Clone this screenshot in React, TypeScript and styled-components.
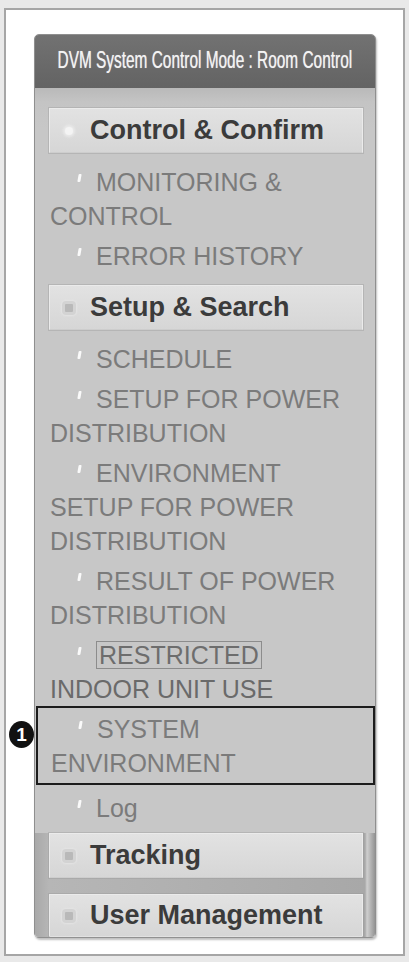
import styled, { createGlobalStyle } from 'styled-components';

const GlobalStyle = createGlobalStyle`
  html, body {
    margin: 0;
    padding: 0;
    background: #e9e9e9;
  }
  body {
    font-family: 'Liberation Sans', Arial, sans-serif;
  }
  * {
    box-sizing: border-box;
  }
`;

type Entry = {
  label: string;
  boxed?: boolean;
  rest?: string;
  highlight?: boolean;
};

type Section = {
  title: string;
  icon: 'dot' | 'square';
  items: Entry[];
};

const sections: Section[] = [
  {
    title: 'Control & Confirm',
    icon: 'dot',
    items: [{ label: 'MONITORING & CONTROL' }, { label: 'ERROR HISTORY' }],
  },
  {
    title: 'Setup & Search',
    icon: 'square',
    items: [
      { label: 'SCHEDULE' },
      { label: 'SETUP FOR POWER DISTRIBUTION' },
      { label: 'ENVIRONMENT SETUP FOR POWER DISTRIBUTION' },
      { label: 'RESULT OF POWER DISTRIBUTION' },
      { label: 'RESTRICTED', boxed: true, rest: 'INDOOR UNIT USE' },
      { label: 'SYSTEM ENVIRONMENT', highlight: true },
      { label: 'Log' },
    ],
  },
];

const App = () => {
  return (
    <>
      <GlobalStyle />
      <Frame>
        <Panel>
          <Header>
            <HeaderText>DVM System Control Mode : Room Control</HeaderText>
          </Header>
          <Body>
            {sections.map((section) => (
              <div key={section.title}>
                <MenuBar>
                  <BarIcon $round={section.icon === 'dot'} />
                  {section.title}
                </MenuBar>
                <ItemList>
                  {section.items.map((item) => (
                    <Item key={item.label} $highlight={item.highlight}>
                      {item.highlight && <Badge>1</Badge>}
                      <Bullet />
                      {item.boxed ? (
                        <>
                          <Boxed>{item.label}</Boxed>
                          <br />
                          <Dark>{item.rest}</Dark>
                        </>
                      ) : (
                        item.label
                      )}
                    </Item>
                  ))}
                </ItemList>
              </div>
            ))}
            <BottomGroup>
              <MenuBar>
                <BarIcon />
                Tracking
              </MenuBar>
              <MenuBar $last>
                <BarIcon />
                User Management
              </MenuBar>
            </BottomGroup>
          </Body>
        </Panel>
      </Frame>
    </>
  );
};

const Frame = styled.div`
  margin: 8px 4px 0 4px;
  height: 948px;
  border: 2px solid #a6a6a6;
  background: #ffffff;
  padding: 24px 29px 0 28px;
`;

const Panel = styled.div`
  position: relative;
  width: 342px;
  border: 1px solid #8f8f8f;
  border-radius: 5px;
  background: #c7c7c7;
  box-shadow: 1px 2px 2px rgba(0, 0, 0, 0.25);
`;

const Header = styled.div`
  height: 53px;
  display: flex;
  align-items: center;
  justify-content: center;
  background: linear-gradient(#727272, #636363);
  border-radius: 4px 4px 0 0;
  overflow: hidden;
`;

const HeaderText = styled.span`
  display: inline-block;
  white-space: nowrap;
  font-size: 23px;
  color: #f4f4f4;
  transform: scaleX(0.67);
  text-shadow: 0 0 1px rgba(255, 255, 255, 0.6);
  margin-top: -2px;
`;

const Body = styled.div`
  padding-top: 20px;
  background: linear-gradient(#b9b9b9 0, #c4c4c4 14px, #c7c7c7 40px);
`;

const MenuBar = styled.div<{ $last?: boolean }>`
  display: flex;
  align-items: center;
  height: ${(p) => (p.$last ? '43px' : '45px')};
  margin: 0 12px 0 14px;
  padding-left: 10px;
  background: linear-gradient(#e2e2e2, #d6d6d6);
  border: 1px solid #ebebeb;
  border-bottom-color: ${(p) => (p.$last ? 'transparent' : '#cdcdcd')};
  box-shadow: 0 0 0 1px rgba(150, 150, 150, 0.35);
  font-size: 27px;
  font-weight: bold;
  color: #3b3b3b;
  white-space: nowrap;
`;

const BarIcon = styled.span<{ $round?: boolean }>`
  flex: none;
  width: ${(p) => (p.$round ? '8px' : '14px')};
  height: ${(p) => (p.$round ? '8px' : '14px')};
  margin: 0 ${(p) => (p.$round ? '17px' : '14px')} 0
    ${(p) => (p.$round ? '5px' : '2px')};
  border-radius: ${(p) => (p.$round ? '50%' : '4px')};
  background: ${(p) => (p.$round ? '#f4f4f4' : '#b9b9b9')};
  border: ${(p) => (p.$round ? '0' : '3px solid #d3d3d3')};
  box-shadow: ${(p) =>
    p.$round ? '0 0 3px 2px rgba(245,245,245,0.6)' : '0 0 2px 1px #e4e4e4'};
`;

const ItemList = styled.div`
  padding: 6px 0 12px 0;
`;

const Item = styled.div<{ $highlight?: boolean }>`
  position: relative;
  padding: 6px 10px ${(p) => (p.$highlight ? '5px' : '0')} 15px;
  font-size: 25px;
  line-height: 34px;
  color: #7b7b7b;
  outline: ${(p) => (p.$highlight ? '2px solid #1c1c1c' : 'none')};
  outline-offset: -2px;
  margin-left: ${(p) => (p.$highlight ? '1px' : '0')};
`;

const Bullet = styled.span`
  display: inline-block;
  width: 3px;
  height: 8px;
  margin: 0 15px 0 28px;
  vertical-align: 9px;
  border-radius: 1px;
  background: #fafafa;
  transform: skewX(-10deg);
`;

const Boxed = styled.span`
  display: inline-block;
  line-height: 26px;
  padding: 0 2px;
  border: 1px solid #8c8c8c;
  color: #6d6d6d;
`;

const Dark = styled.span`
  color: #6a6a6a;
`;

const Badge = styled.span`
  position: absolute;
  left: -27px;
  top: 15px;
  width: 25px;
  height: 27px;
  border-radius: 50%;
  background: #111111;
  color: #ffffff;
  font-size: 19px;
  font-weight: bold;
  line-height: 27px;
  text-align: center;
`;

const BottomGroup = styled.div`
  display: flex;
  flex-direction: column;
  gap: 16px;
  margin-top: -4px;
  background: linear-gradient(
    to right,
    #a9a9a9 0,
    #b6b6b6 14px,
    #a8a8a8 330px,
    #cfcfcf 332px,
    #8d8d8d 341px
  );
  border-radius: 0 0 4px 4px;
`;

export default App;
